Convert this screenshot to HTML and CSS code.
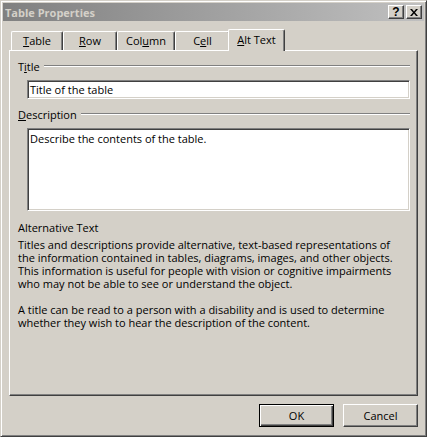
FILE: index.html
```html
<!DOCTYPE html>
<html>
<head>
<meta charset="utf-8">
<title>Table Properties</title>
<link rel="stylesheet" href="styles.css">
</head>
<body>
<div class="window">
  <div class="titlebar">
    <span class="title">Table Properties</span>
    <div class="caption-buttons">
      <span class="cbtn help">?</span>
      <span class="cbtn close"><svg width="8" height="7" viewBox="0 0 8 7"><path d="M0 0h2l2 2.4L6 0h2L5 3.5 8 7H6L4 4.6 2 7H0l3-3.5z" fill="#000"/></svg></span>
    </div>
  </div>
  <div class="content">
    <div class="tabs">
      <div class="tab tab-table"><u>T</u>able</div>
      <div class="tab tab-row"><u>R</u>ow</div>
      <div class="tab tab-column">Col<u>u</u>mn</div>
      <div class="tab tab-cell">C<u>e</u>ll</div>
      <div class="tab tab-alt active"><u>A</u>lt Text</div>
    </div>
    <div class="panel">
      <div class="group-head"><span>T<u>i</u>tle</span><span class="rule"></span></div>
      <div class="textbox single">Title of the table</div>
      <div class="group-head desc-head"><span><u>D</u>escription</span><span class="rule"></span></div>
      <div class="textbox multi">Describe the contents of the table.</div>
      <div class="alt-head">Alternative Text</div>
      <p class="info">Titles and descriptions provide alternative, text-based representations of<br>the information contained in tables, diagrams, images, and other objects.<br>This information is useful for people with vision or cognitive impairments<br>who may not be able to see or understand the object.</p>
      <p class="info second">A title can be read to a person with a disability and is used to determine<br>whether they wish to hear the description of the content.</p>
    </div>
    <div class="buttons">
      <div class="btn default">OK</div>
      <div class="btn">Cancel</div>
    </div>
  </div>
</div>
</body>
</html>
```

FILE: styles.css
```css
* { box-sizing: border-box; }

body {
  margin: 0;
  background: #d4d0c8;
  font-family: "Open Sans", "Liberation Sans", sans-serif;
  font-size: 11px;
  line-height: 13px;
  color: #000;
}

u { text-decoration: underline; text-underline-offset: 1px; }

.window {
  width: 427px;
  height: 437px;
  background: #d4d0c8;
  border: 1px solid;
  border-color: #d4d0c8 #404040 #404040 #d4d0c8;
  box-shadow: inset 1px 1px #fff, inset -1px -1px #808080;
  padding: 2px;
  display: flex;
  flex-direction: column;
}

.titlebar {
  height: 18px;
  background: linear-gradient(to right, #808080, #c0c0c0);
  display: flex;
  align-items: center;
  justify-content: space-between;
  padding: 0 2px 0 2px;
}

.title {
  color: #d4d0c8;
  font-weight: bold;
  white-space: nowrap;
}

.caption-buttons {
  display: flex;
  gap: 2px;
}

.cbtn {
  width: 16px;
  height: 14px;
  background: #d4d0c8;
  border: 1px solid;
  border-color: #fff #404040 #404040 #fff;
  box-shadow: inset -1px -1px #808080;
  display: flex;
  align-items: center;
  justify-content: center;
  font-family: "Liberation Sans", sans-serif;
  font-weight: bold;
  font-size: 12px;
  line-height: 12px;
}

.content {
  flex: 1;
  padding: 8px 6px 0 6px;
  display: flex;
  flex-direction: column;
}

.tabs {
  display: flex;
  align-items: flex-end;
  height: 21px;
  padding-left: 2px;
}

.tab {
  height: 19px;
  padding-top: 2px;
  border-top: 1px solid #fff;
  border-left: 1px solid #fff;
  border-right: 1px solid #404040;
  box-shadow: inset -1px 0 #808080;
  border-radius: 2px 2px 0 0;
  text-align: center;
  white-space: nowrap;
  background: #d4d0c8;
}

.tab-table { width: 52px; }
.tab-row { width: 54px; }
.tab-column { width: 58px; }
.tab-cell { width: 55px; }
.tab-alt { width: 53px; }

.tab.active {
  width: 57px;
  height: 22px;
  padding-top: 3px;
  margin: 0 -2px -1px -2px;
  position: relative;
  z-index: 1;
}

.panel {
  height: 346px;
  border: 1px solid;
  border-color: #fff #404040 #404040 #fff;
  box-shadow: inset -1px -1px #808080;
  padding: 9px 7px 0 8px;
  display: flex;
  flex-direction: column;
}

.group-head {
  display: flex;
  align-items: flex-start;
  white-space: nowrap;
}

.rule {
  flex: 1;
  height: 2px;
  margin: 5px 0 0 4px;
  border-top: 1px solid #808080;
  border-bottom: 1px solid #fff;
}

.desc-head { margin-top: 9px; }

.textbox {
  margin: 7px 0 0 9px;
  background: #fff;
  border: 1px solid;
  border-color: #808080 #fff #fff #808080;
  box-shadow: inset 1px 1px #404040, inset -1px -1px #d4d0c8;
  padding: 2px 2px 0 2px;
  white-space: nowrap;
}

.textbox.single { height: 19px; }
.textbox.multi { height: 83px; padding-top: 3px; }

.alt-head { margin-top: 10px; }

.info {
  margin: 4px 0 0 0;
  white-space: nowrap;
}

.info.second { margin-top: 13px; }

.buttons {
  display: flex;
  justify-content: flex-end;
  gap: 9px;
  margin-top: 8px;
}

.btn {
  width: 75px;
  height: 23px;
  border: 1px solid;
  border-color: #fff #404040 #404040 #fff;
  box-shadow: inset -1px -1px #808080;
  display: flex;
  align-items: center;
  justify-content: center;
}

.btn.default {
  border-color: #000;
  box-shadow: inset 1px 1px #fff, inset -1px -1px #404040, inset -2px -2px #808080;
}
```
